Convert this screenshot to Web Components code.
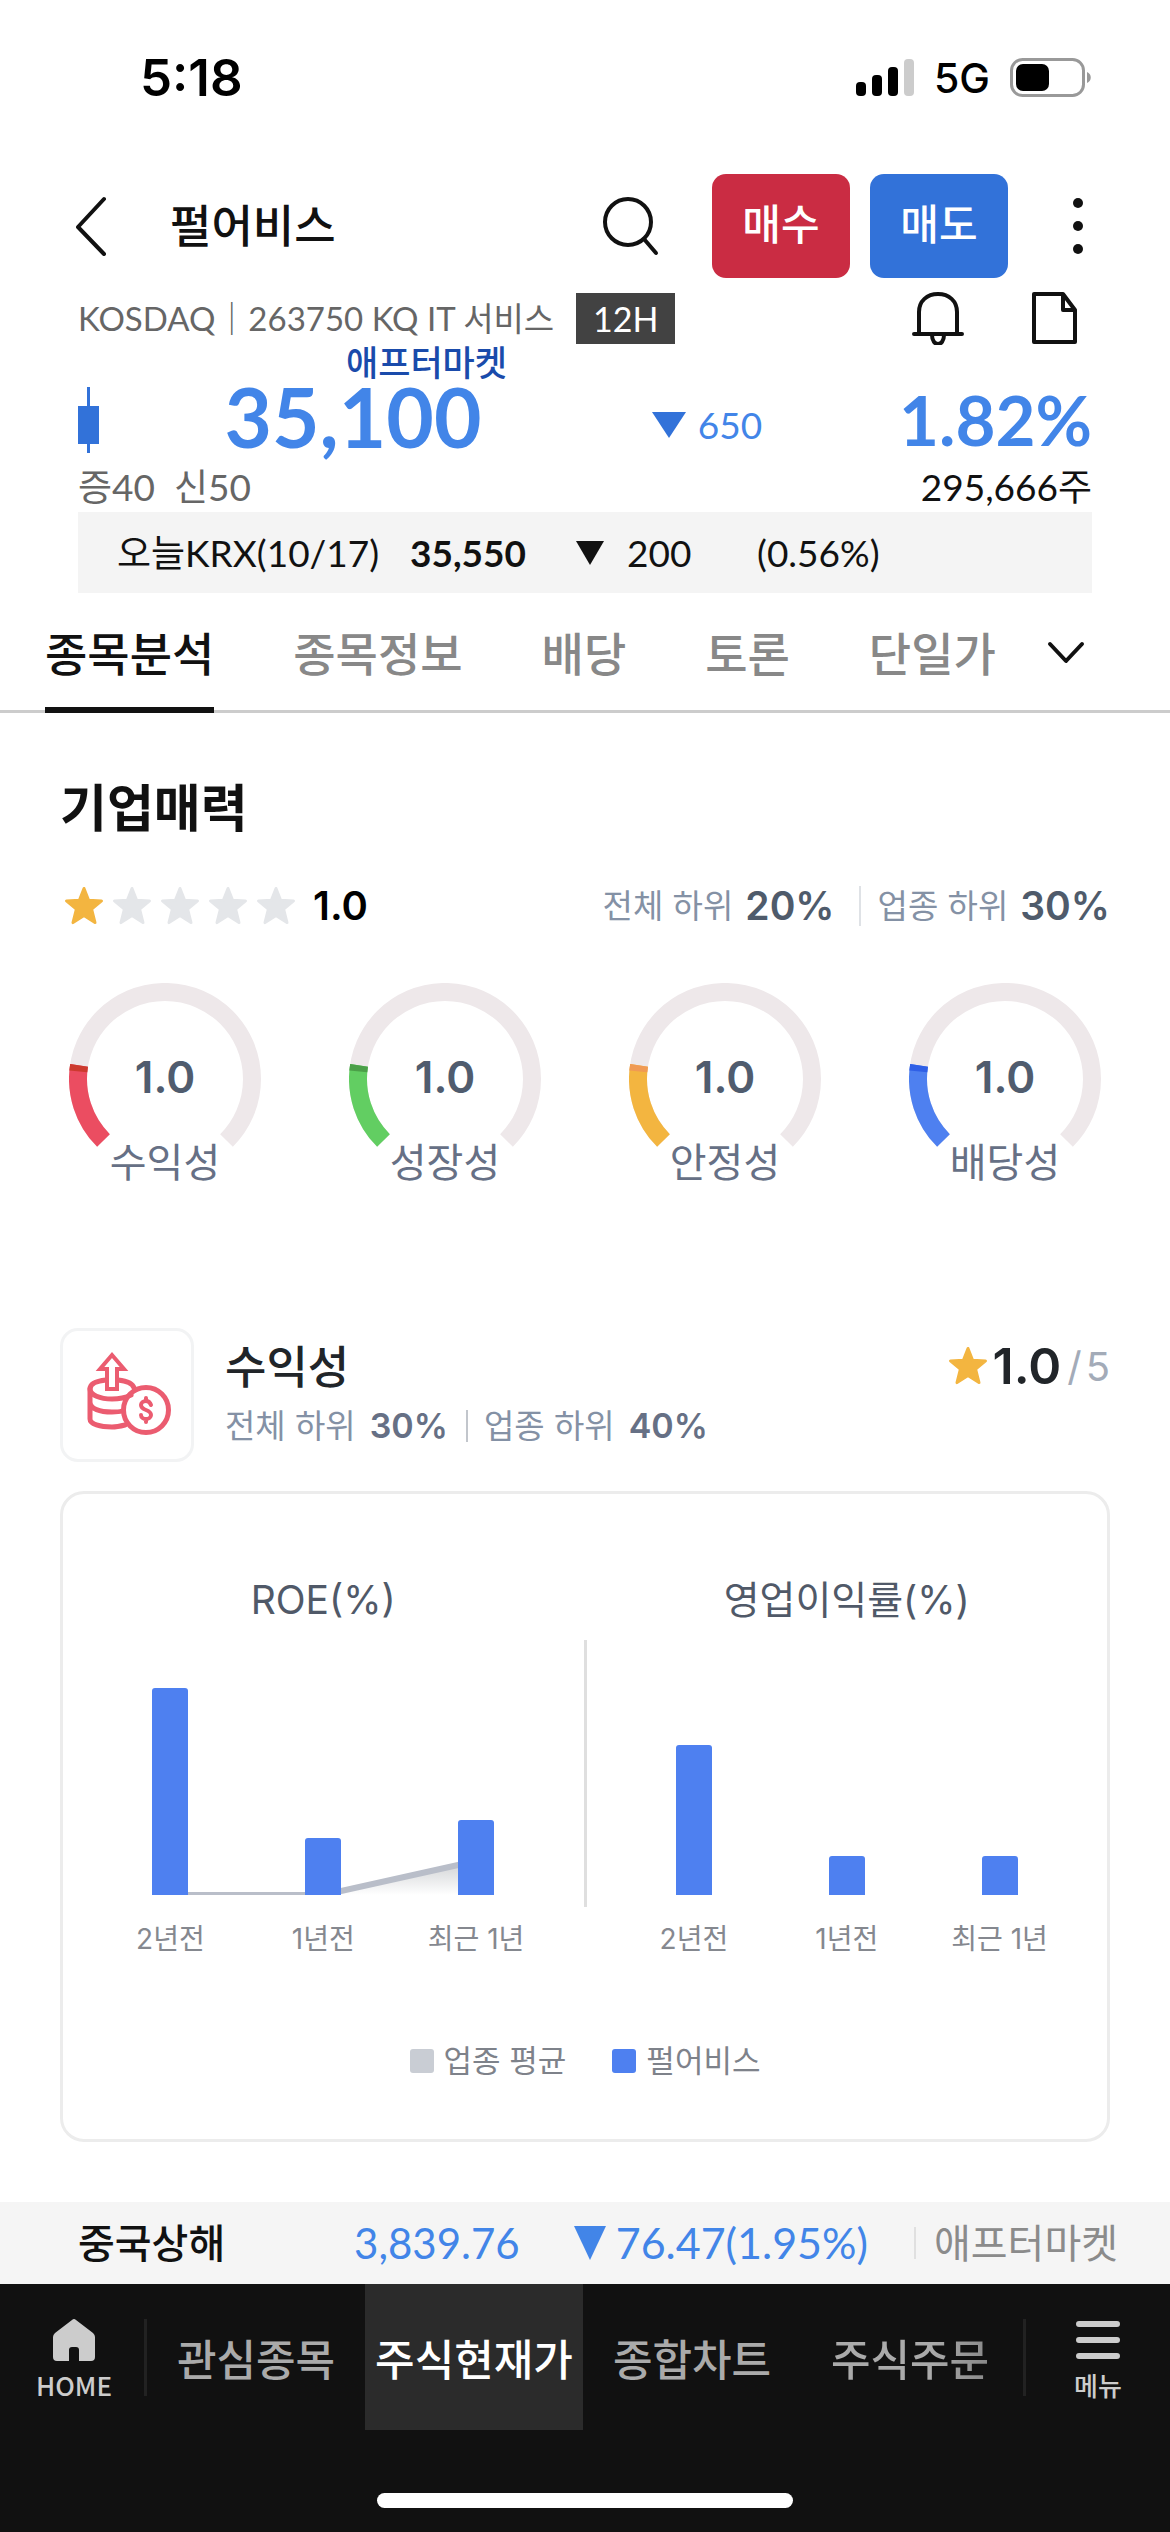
<!DOCTYPE html>
<html lang="ko">
<head>
<meta charset="utf-8">
<meta name="viewport" content="width=device-width, initial-scale=1">
<title>펄어비스 - 종목분석</title>
<style>
  html, body { margin: 0; background: #fff; }
  body {
    min-height: 100vh;
    display: flex;
    flex-direction: column;
    color: #111;
    font-family: Lato, "Noto Sans CJK KR", sans-serif;
  }
  main {
    flex: 1;
    padding: 66px 60px 60px;
    font-family: Inter, "Noto Sans CJK KR", sans-serif;
  }
  h2 { margin: 0; font-size: 51px; line-height: 60px; font-weight: 700; color: #111; }
  .gauges { display: grid; grid-template-columns: repeat(4, 1fr); margin: 52px -35px 0; }
</style>
</head>
<body>
<status-bar time="5:18" network="5G"></status-bar>
<stock-header name="펄어비스"></stock-header>
<quote-panel></quote-panel>
<tab-strip active="종목분석" items="종목분석,종목정보,배당,토론,단일가"></tab-strip>
<main>
  <h2>기업매력</h2>
  <rating-row score="1.0" total="20%" sector="30%"></rating-row>
  <div class="gauges">
    <score-gauge score="1.0" color="#eb4d61" cap="#cc3a2e">수익성</score-gauge>
    <score-gauge score="1.0" color="#62ce62" cap="#4b9f48">성장성</score-gauge>
    <score-gauge score="1.0" color="#f3b540" cap="#f09a54">안정성</score-gauge>
    <score-gauge score="1.0" color="#4e80f0" cap="#2f5fe6">배당성</score-gauge>
  </div>
  <metric-head score="1.0" max="5" total="30%" sector="40%">수익성</metric-head>
  <chart-card>
    <bar-chart slot="left" values="207,57,75" average="0,0,34">ROE(%)</bar-chart>
    <bar-chart slot="right" values="150,39,39">영업이익률(%)</bar-chart>
  </chart-card>
</main>
<index-ticker></index-ticker>
<bottom-nav active="주식현재가" items="관심종목,주식현재가,종합차트,주식주문"></bottom-nav>

<script>
const base = `
  *, *::before { box-sizing: border-box; }
  button, a { font: inherit; color: inherit; background: none; border: 0; padding: 0; margin: 0; text-decoration: none; white-space: nowrap; }
  svg { display: block; flex: none; }
  span, b, strong { white-space: nowrap; }
`;
function define(name, render) {
  customElements.define(name, class extends HTMLElement {
    connectedCallback() {
      if (this.shadowRoot) return;
      const t = document.createElement('template');
      t.innerHTML = render(k => this.getAttribute(k) || '');
      const root = this.attachShadow({ mode: 'open' });
      root.innerHTML = `<style>${base}</style>`;
      root.append(t.content.cloneNode(true));
    }
  });
}

define('star-icon', a => `
  <style>:host { display: block; color: #f3b540; }</style>
  <svg width="42" height="42" viewBox="0 0 42 42" aria-hidden="true">
    <path d="M21 3.5 25.6 15.2 38.5 15.9 28.6 24.1 32 37.6 21 30.4 10 37.6 13.4 24.1 3.5 15.9 16.4 15.2Z"
      fill="currentColor" stroke="currentColor" stroke-width="3" stroke-linejoin="round"/>
  </svg>`);

define('status-bar', a => `
  <style>
    :host { display: flex; align-items: center; justify-content: space-between; height: 156px; padding: 0 78px 0 140px; color: #000; font-family: Inter, sans-serif; }
    time { font-size: 51px; font-weight: 600; line-height: 60px; }
    .right { display: flex; align-items: center; gap: 20px; font-size: 41px; font-weight: 500; line-height: 60px; }
  </style>
  <time>${a('time')}</time>
  <div class="right">
    <svg width="58" height="38" viewBox="0 0 58 38" aria-hidden="true">
      <rect x="0" y="23" width="10" height="14" rx="4"/><rect x="16" y="16" width="10" height="21" rx="4"/>
      <rect x="32" y="8" width="10" height="29" rx="4"/><rect x="48" y="0" width="10" height="37" rx="4" fill="#ccc"/>
    </svg>
    <span>${a('network')}</span>
    <svg width="82" height="40" viewBox="0 0 82 40" aria-hidden="true">
      <rect x="1.5" y="1.5" width="72" height="36" rx="11" fill="none" stroke="#999" stroke-width="3"/>
      <rect x="6" y="6" width="33" height="27" rx="7"/>
      <path d="M77 14c5 2 5 9 0 11Z" fill="#999"/>
    </svg>
  </div>`);

define('stock-header', a => `
  <style>
    :host { display: flex; align-items: center; margin-top: 18px; height: 104px; padding: 0 86px 0 74px; }
    h1 { margin: 0 auto 0 62px; font-size: 45px; font-weight: 500; line-height: 60px; color: #111; white-space: nowrap; }
    .trade { height: 104px; width: 138px; border-radius: 14px; color: #fff; font-size: 42px; line-height: 60px; font-weight: 500; padding-bottom: 4px; }
    .buy { background: #ca2c43; margin: 0 20px 0 52px; }
    .sell { background: #3272d9; margin-right: 64px; }
  </style>
  <button aria-label="뒤로">
    <svg width="34" height="60" viewBox="0 0 34 60" fill="none" stroke="#111" stroke-width="4" stroke-linecap="round" stroke-linejoin="round"><path d="M30 3 4 31 30 58"/></svg>
  </button>
  <h1>${a('name')}</h1>
  <button aria-label="검색">
    <svg width="58" height="60" viewBox="0 0 58 60" fill="none" stroke="#111" stroke-width="4" stroke-linecap="round"><circle cx="26" cy="26" r="23"/><path d="M42 43 54 57"/></svg>
  </button>
  <button class="trade buy">매수</button>
  <button class="trade sell">매도</button>
  <button aria-label="더보기">
    <svg width="12" height="56" viewBox="0 0 12 56" fill="#111"><circle cx="6" cy="5" r="5"/><circle cx="6" cy="28" r="5"/><circle cx="6" cy="51" r="5"/></svg>
  </button>`);

define('quote-panel', a => `
  <style>
    :host { display: block; margin: 12px 78px 0; }
    .meta { display: flex; align-items: center; height: 56px; font-size: 33px; line-height: 48px; color: #666; }
    .badge { margin: 0 auto 0 22px; width: 99px; text-align: center; background: #424242; color: #fff; line-height: 51px; font-size: 34px; }
    .meta button + button { margin-left: 67px; }
    .meta button:last-child { margin-right: 14px; }
    .market { padding-left: 268px; font-size: 35px; line-height: 32px; font-weight: 500; color: #1a4bab; }
    .price { display: grid; grid-template-columns: 22px 506fr 200fr 286fr; align-items: center; height: 86px; padding-bottom: 6px; color: #4285e8; }
    .now { font-size: 82px; line-height: 76px; font-weight: 700; text-align: center; padding-bottom: 8px; }
    .diff { display: flex; align-items: center; justify-content: center; gap: 12px; font-size: 37px; line-height: 68px; padding: 10px 0 0 2px; }
    .pct { font-size: 69px; line-height: 80px; font-weight: 700; text-align: right; }
    .sub { display: flex; justify-content: space-between; font-size: 37px; line-height: 46px; padding-bottom: 2px; }
    .sub span:first-child { color: #666; }
    .krx { display: grid; grid-template-columns: 293px 166px 51px 130px 1fr; align-items: center; height: 81px; padding-left: 39px; background: #f4f4f4; font-size: 37px; line-height: 48px; white-space: nowrap; }
    .krx b { font-weight: 700; }
  </style>
  <div class="meta">
    <span>KOSDAQ｜263750 KQ IT 서비스</span>
    <span class="badge">12H</span>
    <button aria-label="알림">
      <svg width="52" height="54" viewBox="0 0 52 54" fill="none" stroke="#111" stroke-width="4" stroke-linecap="round" stroke-linejoin="round"><path d="M7 42V21C7 10 15 3 26 3s19 7 19 18v21M2 43h48M20 44c0 6 3 9 6 9s6-3 6-9"/></svg>
    </button>
    <button aria-label="메모">
      <svg width="47" height="54" viewBox="0 0 47 54" fill="none" stroke="#111" stroke-width="4" stroke-linejoin="round"><path d="M3 3H32L44 19V51H3Z"/><path d="M32 3V19H44"/></svg>
    </button>
  </div>
  <div class="market">애프터마켓</div>
  <div class="price">
    <svg width="22" height="66" viewBox="0 0 22 66" fill="#3272d9" aria-hidden="true"><path d="M9 0h3v66H9Z"/><path d="M0 19h21v38H0Z"/></svg>
    <span class="now">35,100</span>
    <span class="diff"><svg width="34" height="26" viewBox="0 0 34 26" fill="#3272d9" aria-hidden="true"><path d="M0 0h34L17 26Z"/></svg>650</span>
    <span class="pct">1.82%</span>
  </div>
  <div class="sub"><span>증40&nbsp; 신50</span><span>295,666주</span></div>
  <div class="krx">
    <span>오늘KRX(10/17)</span><b>35,550</b>
    <svg width="28" height="24" viewBox="0 0 28 24" fill="#111" aria-hidden="true"><path d="M0 0h28L14 24Z"/></svg>
    <span>200</span><span>(0.56%)</span>
  </div>`);

define('tab-strip', a => `
  <style>
    :host { display: block; }
    nav { display: flex; align-items: stretch; height: 120px; padding: 0 84px 0 45px; box-shadow: inset 0 -3px #ccc; font-size: 46px; color: #888; }
    .list { display: flex; flex: 1; gap: 79px; }
    [role=tab] { padding-top: 2px; border-bottom: 6px solid transparent; font-weight: 500; }
    [aria-selected=true] { color: #111; border-color: #111; }
  </style>
  <nav><div class="list" role="tablist">${a('items').split(',').map(t =>
    `<button role="tab" aria-selected="${t === a('active')}">${t}</button>`).join('')}</div>
    <button aria-label="더보기"><svg width="40" height="24" viewBox="0 0 40 24" fill="none" stroke="#111" stroke-width="4" stroke-linecap="round" stroke-linejoin="round"><path d="M4 3 20 20 36 3"/></svg></button>
  </nav>`);

define('rating-row', a => `
  <style>
    :host { display: flex; align-items: center; margin-top: 42px; height: 50px; font-size: 33px; line-height: 50px; color: #8491a5; }
    .stars { display: flex; gap: 6px; padding-left: 3px; margin-right: 16px; }
    .off { color: #e4e6e9; }
    .score { font-size: 40px; font-weight: 600; color: #000; margin-right: auto; }
    b { font-size: 39px; font-weight: 600; color: #4f5b6b; margin-left: 12px; }
    i { width: 2px; height: 40px; background: #dfe2e6; margin: 0 17px 0 24px; }
  </style>
  <div class="stars"><star-icon></star-icon>${'<star-icon class="off"></star-icon>'.repeat(4)}</div>
  <span class="score">${a('score')}</span>
  <span>전체 하위</span><b>${a('total')}</b><i></i><span>업종 하위</span><b>${a('sector')}</b>`);

define('score-gauge', a => `
  <style>
    :host { display: grid; justify-items: center; }
    svg, strong { grid-area: 1 / 1; }
    path { fill: none; stroke-width: 18; }
    strong { font-size: 44px; line-height: 188px; height: 164px; font-weight: 600; color: #505c6e; }
    .label { font-size: 40px; line-height: 32px; color: #667085; }
  </style>
  <svg width="192" height="164" viewBox="0 0 192 164" aria-hidden="true">
    <path d="M34.5 157.5A87 87 0 1 1 157.5 157.5" stroke="#eee8ea"/>
    <path d="M34.5 157.5A87 87 0 1 1 157.5 157.5" stroke="${a('color')}" pathLength="270" stroke-dasharray="54 270"/>
    <path d="M34.5 157.5A87 87 0 1 1 157.5 157.5" stroke="${a('cap')}" pathLength="270" stroke-dasharray="4 270" stroke-dashoffset="-50"/>
  </svg>
  <strong>${a('score')}</strong>
  <span class="label"><slot></slot></span>`);

define('metric-head', a => `
  <style>
    :host { display: flex; align-items: center; margin-top: 149px; color: #8491a5; }
    .pic { width: 134px; height: 134px; border: 3px solid #f2f3f4; border-radius: 18px; margin-right: 31px; }
    .text { flex: 1; }
    h3 { margin: 0; font-size: 45px; line-height: 62px; font-weight: 500; color: #212529; }
    p { display: flex; align-items: center; margin: 0; font-size: 33px; line-height: 54px; }
    b { font-size: 34px; font-weight: 600; color: #667085; margin-left: 14px; }
    i { width: 2px; height: 32px; background: #c2c6cc; margin: 0 16px 0 18px; }
    .score { display: flex; align-items: center; align-self: flex-start; height: 76px; }
    strong { font-size: 50px; font-weight: 600; color: #212529; margin: 0 6px 0 4px; }
    small { font-size: 40px; color: #a3abb8; }
    small + small { margin-left: 4px; }
  </style>
  <div class="pic">
    <svg width="128" height="128" viewBox="13 13 128 128" fill="none" stroke="#eb5c70" stroke-width="5" stroke-linejoin="round" stroke-linecap="round" aria-hidden="true">
      <path d="M56 62C46 63 40 66 40 71c0 6 10 10 22 10 8 0 15-2 19-4M68 62c9 1 15 4 16 8"/>
      <path d="M40 71v30c0 5 10 8 22 8 5 0 9-1 13-2M40 84c0 7 10 10 22 10 4 0 7 0 10-1"/>
      <path d="M57 71V51h-7l12-14 12 14h-7v20Z" stroke-width="4" stroke-linejoin="miter"/>
      <circle cx="96" cy="92" r="22.5"/>
      <path d="M101 87c-1-3-3-4-5-4-3 0-5 2-5 4 0 6 10 4 10 10 0 2-2 4-5 4-2 0-5-1-5-4M96 80v3M96 101v3" stroke-width="4"/>
    </svg>
  </div>
  <div class="text">
    <h3><slot></slot></h3>
    <p><span>전체 하위</span><b>${a('total')}</b><i></i><span>업종 하위</span><b>${a('sector')}</b></p>
  </div>
  <div class="score"><star-icon></star-icon><strong>${a('score')}</strong><small>/</small><small>${a('max')}</small></div>`);

define('bar-chart', a => {
  const vals = a('values').split(',').map(Number);
  const avg = a('average') ? a('average').split(',').map(Number) : null;
  const names = ['2년전', '1년전', '최근 1년'];
  const pts = avg ? avg.map((v, i) => [76.5 + 153 * i, 207 - v]) : [];
  const line = pts.map(p => p.join(' ')).join('L');
  return `
  <style>
    :host { display: block; padding: 0 31px; text-align: center; }
    h4 { margin: 0; font-size: 39px; line-height: 48px; font-weight: 400; color: #505968; white-space: nowrap; }
    .plot { display: grid; margin-top: 64px; height: 207px; }
    .plot > * { grid-area: 1 / 1; }
    .bars { display: flex; align-items: flex-end; justify-content: space-around; z-index: 1; }
    .bars div { width: 36px; background: #4e80f0; border-radius: 3px 3px 0 0; }
    .names { display: grid; grid-template-columns: repeat(3, 1fr); margin-top: 24px; font-size: 28px; line-height: 40px; color: #85888f; }
  </style>
  <h4><slot></slot></h4>
  <div class="plot">
    ${avg ? `<svg width="100%" height="207" viewBox="0 0 459 207" preserveAspectRatio="none" aria-hidden="true">
      <defs><linearGradient id="fade" x1="0" y1="0" x2="0" y2="1"><stop offset="0" stop-color="#cfd1d3"/><stop offset="1" stop-color="#fff"/></linearGradient></defs>
      <path d="M${line}L${pts[2][0]} 207L${pts[0][0]} 207Z" fill="url(#fade)"/>
      <path d="M${line}" fill="none" stroke="#b9bec9" stroke-width="6"/>
    </svg>` : ''}
    <div class="bars">${vals.map(v => `<div style="height:${v}px"></div>`).join('')}</div>
  </div>
  <div class="names">${names.map(n => `<span>${n}</span>`).join('')}</div>`;
});

define('chart-card', a => `
  <style>
    :host { display: block; margin-top: 29px; padding: 82px 0 58px; border: 3px solid #ececec; border-radius: 24px; }
    .body { display: grid; grid-template-columns: 1fr 3px 1fr; }
    .rule { background: #dfdfdf; margin: 64px 0 52px; }
    .legend { display: flex; justify-content: center; gap: 46px; margin-top: 82px; font-size: 31px; line-height: 40px; color: #7e828a; }
    .legend span { display: flex; align-items: center; gap: 10px; }
    .legend span::before { content: ""; width: 24px; height: 24px; border-radius: 3px; background: var(--key); }
  </style>
  <div class="body"><slot name="left"></slot><div class="rule"></div><slot name="right"></slot></div>
  <div class="legend"><span style="--key:#c9cdd4">업종 평균</span><span style="--key:#4e80f0">펄어비스</span></div>`);

define('index-ticker', a => `
  <style>
    :host { display: flex; align-items: center; height: 82px; padding: 0 52px 0 78px; background: #f5f5f5; font-size: 42px; line-height: 60px; color: #4285e8; white-space: nowrap; }
    .name { font-size: 40px; font-weight: 500; color: #111; margin-right: auto; }
    .chg { display: flex; align-items: center; gap: 10px; margin: 0 46px 0 54px; font-size: 43px; }
    .next { font-size: 40px; color: #8b8b8b; border-left: 2px solid #e0e0e0; padding-left: 18px; line-height: 32px; }
  </style>
  <span class="name">중국상해</span>
  <span>3,839.76</span>
  <span class="chg"><svg width="32" height="34" viewBox="0 0 32 34" fill="#4285e8" aria-hidden="true"><path d="M0 0h32L16 34Z"/></svg>76.47(1.95%)</span>
  <span class="next">애프터마켓</span>`);

define('bottom-nav', a => `
  <style>
    :host { display: block; height: 248px; background: #111; color: #ccc; }
    nav { display: flex; height: 146px; }
    a, .menu { display: flex; align-items: center; justify-content: center; }
    .side { flex: 0 0 144px; flex-direction: column; gap: 10px; font-size: 26px; line-height: 28px; font-weight: 500; padding-top: 4px; font-family: "Noto Sans CJK KR", sans-serif; }
    .rule { flex: none; align-self: center; width: 3px; height: 77px; background: #222; }
    .items { flex: 1; display: flex; font-size: 43px; font-weight: 500; color: #aaa; padding-right: 4px; }
    .items a { flex: 1; }
    .items a:last-child { background: linear-gradient(90deg, #aaa 60%, #777 100%); -webkit-background-clip: text; background-clip: text; color: transparent; }
    .items [aria-current] { background: #2b2b2b; color: #fff; }
    .home { padding-left: 4px; }
    .bar { width: 416px; height: 15px; border-radius: 8px; background: #fff; margin: 63px auto 0; }
  </style>
  <nav>
    <a class="side home" href="#home">
      <svg width="42" height="42" viewBox="0 0 42 42" fill="#ccc" aria-hidden="true"><path d="M19 1Q21-1 23 1L40 14Q42 16 42 18V38Q42 42 38 42H26V31Q26 28 23 28H19Q16 28 16 31V42H4Q0 42 0 38V18Q0 16 2 14Z"/></svg>
      <span>HOME</span>
    </a>
    <div class="rule"></div>
    <div class="items">${a('items').split(',').map(t =>
      `<a href="#${t}"${t === a('active') ? ' aria-current="page"' : ''}>${t}</a>`).join('')}</div>
    <div class="rule"></div>
    <button class="side menu">
      <svg width="44" height="42" viewBox="0 0 44 42" stroke="#ccc" stroke-width="6" stroke-linecap="round" aria-hidden="true"><path d="M3 5h38M3 21h38M3 37h38"/></svg>
      <span>메뉴</span>
    </button>
  </nav>
  <div class="bar"></div>`);
</script>
</body>
</html>
